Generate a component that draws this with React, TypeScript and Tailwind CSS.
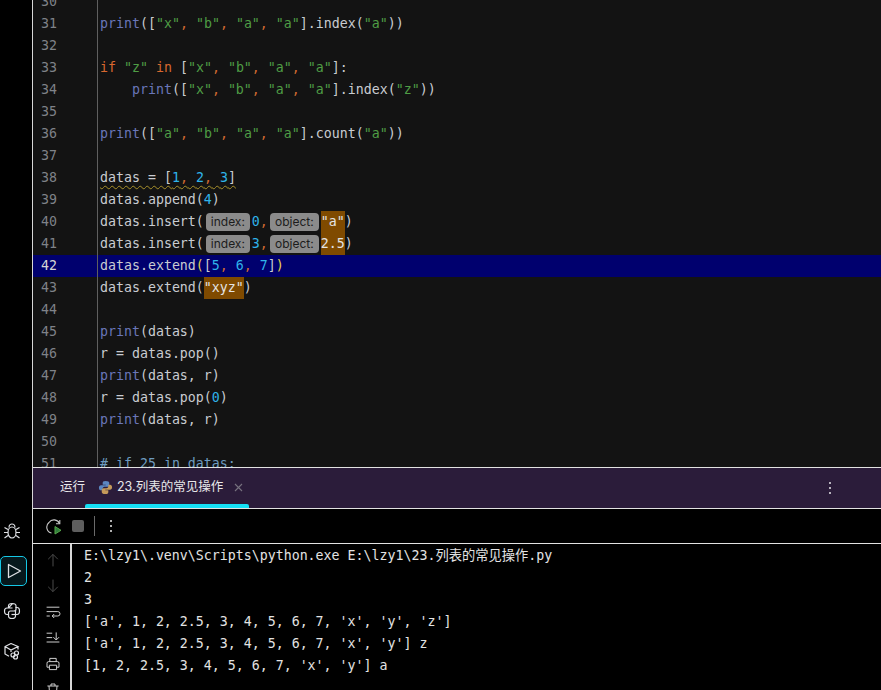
import React from "react";

const P = ({ children }: { children: React.ReactNode }) => <span className="text-[#6a76b8]">{children}</span>;
const S = ({ children }: { children: React.ReactNode }) => <span className="text-[#4f9d45]">{children}</span>;
const C = () => <span className="text-[#cf6a30]">,</span>;
const N = ({ children }: { children: React.ReactNode }) => <span className="text-[#2fb4ea]">{children}</span>;
const K = ({ children }: { children: React.ReactNode }) => <span className="text-[#d8682f]">{children}</span>;
const Hint = ({ w, children }: { w: string; children: React.ReactNode }) => (
  <span className={`inline-flex h-[18px] items-center justify-center rounded-[4px] bg-[#8b8b8b] text-[12px] text-[#1c1c1c] [font-family:Inter,'Noto_Sans',sans-serif] ${w}`}>{children}</span>
);
const Hl = ({ children }: { children: React.ReactNode }) => <span className="flex h-[22px] items-center bg-[#7f4a00] text-[#e4e4e4]">{children}</span>;

const list = (a: string, r: React.ReactNode) => (
  <>
    <P>print</P>([<S>"{a}"</S><C /> <S>"b"</S><C /> <S>"a"</S><C /> <S>"a"</S>]{r}
  </>
);

const lines: [number, React.ReactNode][] = [
  [30, null],
  [31, list("x", <>.index(<S>"a"</S>))</>)],
  [32, null],
  [33, <><K>if</K> <S>"z"</S> <K>in</K> [<S>"x"</S><C /> <S>"b"</S><C /> <S>"a"</S><C /> <S>"a"</S>]:</>],
  [34, <>{"    "}{list("x", <>.index(<S>"z"</S>))</>)}</>],
  [35, null],
  [36, list("a", <>.count(<S>"a"</S>))</>)],
  [37, null],
  [38, <span className="underline decoration-wavy decoration-[#a8902a] decoration-1 underline-offset-[3px]">datas = [<N>1</N><C /> <N>2</N><C /> <N>3</N>]</span>],
  [39, <>datas.append(<N>4</N>)</>],
  [40, <span className="flex items-center whitespace-pre">datas.insert(<Hint w="ml-[2px] mr-[2px] w-[44px]">index:</Hint><N>0</N><C />{" "}<Hint w="ml-[2px] mr-[2px] w-[49px]">object:</Hint><Hl>"a"</Hl>)</span>],
  [41, <span className="flex items-center whitespace-pre">datas.insert(<Hint w="ml-[2px] mr-[2px] w-[44px]">index:</Hint><N>3</N><C />{" "}<Hint w="ml-[2px] mr-[2px] w-[49px]">object:</Hint><Hl>2.5</Hl>)</span>],
  [42, <>datas.extend<span className="text-[#e8d44a]">(</span>[<N>5</N><C /> <N>6</N><C /> <N>7</N>]<span className="text-[#e8d44a]">)</span></>],
  [43, <span className="flex items-center whitespace-pre">datas.extend(<Hl>"xyz"</Hl>)</span>],
  [44, null],
  [45, <><P>print</P>(datas)</>],
  [46, <>r = datas.pop()</>],
  [47, <><P>print</P>(datas, r)</>],
  [48, <>r = datas.pop(<N>0</N>)</>],
  [49, <><P>print</P>(datas, r)</>],
  [50, null],
  [51, <span className="text-[#6d9bc0]"># if 25 in datas:</span>],
];

const output = [
  "E:\\lzy1\\.venv\\Scripts\\python.exe E:\\lzy1\\23.列表的常见操作.py",
  "2",
  "3",
  "['a', 1, 2, 2.5, 3, 4, 5, 6, 7, 'x', 'y', 'z']",
  "['a', 1, 2, 2.5, 3, 4, 5, 6, 7, 'x', 'y'] z",
  "[1, 2, 2.5, 3, 4, 5, 6, 7, 'x', 'y'] a",
];

const mono = "[font-family:'DejaVu_Sans_Mono','Noto_Sans_CJK_SC',monospace] text-[13.28px]";

const Ico = ({ children, cls = "text-[#dfe1e5]", size = 20 }: { children: React.ReactNode; cls?: string; size?: number }) => (
  <svg width={size} height={size} viewBox="0 0 20 20" fill="none" stroke="currentColor" strokeWidth="1.2" className={cls}>{children}</svg>
);

const PyStroke = () => (
  <>
    <path d="M10 2.5c-2.5 0-3.5 1-3.5 2.5v2h4M6.5 7H5C3.3 7 2.5 8.2 2.5 10s.8 3.5 2.5 3.5h1.5V12c0-1.2 1-2 2-2h3.5c1 0 2-.8 2-2V5c0-1.500-1.200-2.500-3.500-2.500z" />
    <path d="M13.500 6.500H15c1.700 0 2.500 1.300 2.500 3.500s-.8 3.500-2.500 3.500h-1.500M13.500 10v3c0 1.500 0 2-.0 2 0 1.500-1 2.500-3.500 2.500s-3.500-1-3.500-2.500v-2" />
    <path d="M9.500 13.500h4" />
  </>
);

export default function App() {
  return (
    <div className="flex h-[690px] w-[881px] overflow-hidden bg-black">
      <aside className="flex h-full w-[33px] shrink-0 flex-col items-center justify-end border-r border-[#d8d8d8] bg-black pb-[19px]">
        <div className="flex h-[40px] w-full items-center justify-center">
          <Ico cls="text-[#dfe1e5] -ml-[8px]">
            <ellipse cx="10" cy="11.500" rx="4" ry="5.500" />
            <path d="M7 6.500c0-2 1.500-3.500 3-3.500s3 1.500 3 3.500M6 8.500 2.500 6.500M14 8.500l3.500-2M6 11.500H2M14 11.500h4M6 14.500l-3.500 2.500M14 14.500l3.500 2.500" />
          </Ico>
        </div>
        <div className="flex h-[40px] w-full items-center">
          <div className="flex h-[30px] w-[27px] items-center justify-center rounded-[5px] border border-[#15c8e6] bg-[#06181c]">
            <svg width="18" height="20" viewBox="0 0 18 20" fill="none" stroke="#dfe1e5" strokeWidth="1.3"><path d="M3.500 3.500v13L15.500 10z" strokeLinejoin="round" /></svg>
          </div>
        </div>
        <div className="flex h-[40px] w-full items-center justify-center">
          <Ico cls="text-[#dfe1e5] -ml-[8px]"><PyStroke /></Ico>
        </div>
        <div className="flex h-[40px] w-full items-center justify-center">
          <Ico cls="text-[#dfe1e5] -ml-[8px]">
            <path d="M9 2.500 3 5.500v7.500l4 2.200M9 2.500l7 3-7 3.500-6-3.500M9 9v2M16 5.500v3" />
            <circle cx="11" cy="14" r="2" />
            <circle cx="14.500" cy="12" r="2" />
            <circle cx="13.500" cy="16" r="2" />
          </Ico>
        </div>
      </aside>

      <main className="flex min-w-0 flex-1 flex-col">
        <section className={`h-[467px] shrink-0 overflow-hidden whitespace-pre bg-[#131313] leading-[22px] text-[#c9ccd1] ${mono}`}>
          <div className="-mt-[9px]">
            {lines.map(([n, code]) => (
              <div key={n} className={`flex h-[22px] ${n === 42 ? "bg-[#00006e]" : ""}`}>
                <div className={`w-[65px] shrink-0 border-r border-[#5f5f5f] pl-[8px] ${n === 42 ? "text-[#d5d5d5]" : "text-[#7f8288]"}`}>{n}</div>
                <div className="flex-1 pl-[2px]">{code}</div>
              </div>
            ))}
          </div>
        </section>

        <div className="flex h-[42px] shrink-0 items-stretch border-y border-[#e2e2e2] bg-[#2b1c3a] text-[12.500px] text-[#e8e8ea] [font-family:Inter,'Noto_Sans_CJK_SC',sans-serif]">
          <div className="flex w-[52px] items-center justify-end pb-[1px] pr-[-1px]">运行</div>
          <div className="relative ml-[0px] flex w-[164px] items-center pb-[1px] pl-[13px]">
            <svg width="15" height="15" viewBox="0 0 16 16" className="mr-[4px]">
              <path d="M8 1C5.500 1 5 2 5 3.200V5h3.200v.6H3.200C1.800 5.600 1 6.600 1 8.200c0 1.700.8 2.800 2.200 2.800H5V9.400C5 8.200 6 7.300 7 7.300h3.200c1 0 1.800-.8 1.800-1.800V3.200C12 2 11 1 8 1z" fill="#5b86c0" />
              <path d="M8 15c2.500 0 3-1 3-2.200V11H7.800v-.6h5c1.400 0 2.200-1 2.200-2.600 0-1.700-.8-2.800-2.200-2.800H11v1.600c0 1.200-1 2.100-2 2.100H5.800c-1 0-1.800.8-1.800 1.800v2.300C4 14 5 15 8 15z" fill="#c49a5a" />
            </svg>
            <span>23.列表的常见操作</span>
            <span className="ml-[11px] text-[#77727f]"><svg width="9" height="9" viewBox="0 0 9 9" stroke="currentColor" strokeWidth="1.100"><path d="M1 1l7 7M8 1 1 8" /></svg></span>
            <div className="absolute bottom-0 left-0 right-0 h-[4px] rounded-t-[2px] bg-[#14e0f5]" />
          </div>
          <div className="ml-auto flex w-[54px] items-center pl-[2px]">
            <svg width="3" height="13" viewBox="0 0 3 13" fill="#b7b2bd"><rect x="0" y="0" width="2" height="2" /><rect x="0" y="5" width="2" height="2" /><rect x="0" y="10" width="2" height="2" /></svg>
          </div>
        </div>

        <div className="flex h-[35px] shrink-0 items-center border-b border-[#e2e2e2] bg-black pl-[13px]">
          <svg width="16" height="16" viewBox="0 0 16 16" fill="none" className="mt-[1px]">
            <path d="M13.500 4.500A6 6 0 0 0 3 3.500 6 6 0 0 0 5.500 14" stroke="#c8c8c8" strokeWidth="1.100" />
            <path d="M13.800 1v3.800H10" stroke="#c8c8c8" strokeWidth="1.100" />
            <path d="M9 7.500v7.500l6-3.700z" fill="#2f7d3a" stroke="#57a64a" />
          </svg>
          <div className="ml-[10px] h-[12px] w-[12px] rounded-[2px] bg-[#5e5e5e]" />
          <div className="ml-[10px] h-[20px] w-px bg-[#6a6a6a]" />
          <svg width="3" height="13" viewBox="0 0 3 13" fill="#b0b0b0" className="ml-[15px]"><rect x="0" y="0" width="2" height="2" /><rect x="0" y="5" width="2" height="2" /><rect x="0" y="10" width="2" height="2" /></svg>
        </div>

        <div className="flex min-h-0 flex-1 overflow-hidden">
          <div className="flex w-[39px] shrink-0 flex-col items-center gap-[10px] overflow-hidden border-r-2 border-[#d8d8d8] pl-[2px] pt-[8px] text-[#d5d5d5]">
            <Ico size={16} cls="shrink-0 text-[#4d4d4d]"><path d="M10 18V3M4 9l6-6 6 6" /></Ico>
            <Ico size={16} cls="shrink-0 text-[#4d4d4d]"><path d="M10 2v15M4 11l6 6 6-6" /></Ico>
            <Ico size={16} cls="shrink-0"><path d="M2 4h16M2 9.500h14a2.500 2.500 0 0 1 0 5.500H9M11.500 12.500 9 15l2.500 2.500M2 15h4" /></Ico>
            <Ico size={16} cls="shrink-0"><path d="M2 4h7M2 9.500h7M2 15h16M14 3v9M10.500 9l3.500 3.500L17.500 9" /></Ico>
            <Ico size={16} cls="shrink-0"><path d="M6 7V3h8v4M4.500 7h11A2 2 0 0 1 17.500 9v5h-3M5.500 14h-3V9a2 2 0 0 1 2-2M5.500 11.500h9V17h-9z" /></Ico>
            <Ico size={16} cls="shrink-0"><path d="M3 5h14M7.500 5V2.500h5V5M5 5l1 13h8l1-13" /></Ico>
          </div>
          <div className={`flex-1 whitespace-pre pl-[12px] pt-[1px] leading-[22px] text-[#e3e3e3] ${mono}`}>
            {output.map((l, i) => <div key={i} className="h-[22px]">{l}</div>)}
          </div>
        </div>
      </main>
    </div>
  );
}
